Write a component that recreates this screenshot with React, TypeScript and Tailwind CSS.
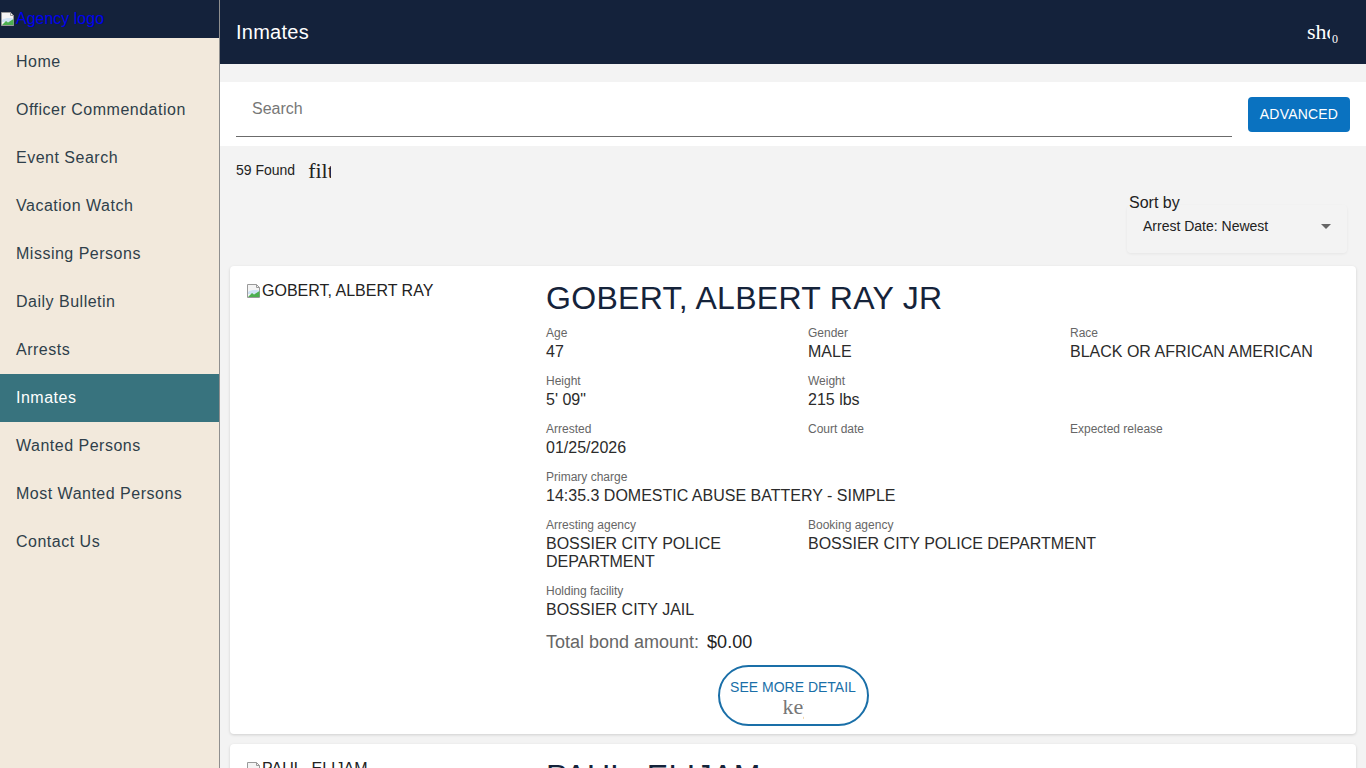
import React from "react";

const navItems = [
  "Home",
  "Officer Commendation",
  "Event Search",
  "Vacation Watch",
  "Missing Persons",
  "Daily Bulletin",
  "Arrests",
  "Inmates",
  "Wanted Persons",
  "Most Wanted Persons",
  "Contact Us",
];

const BrokenImage: React.FC = () => (
  <svg width="16" height="16" viewBox="0 0 16 16" className="block shrink-0">
    <path d="M1.5 1.5h9l3 3v10h-12z" fill="#f4f4f4" stroke="#9a9a9a" />
    <path d="M10.5 1.5v3h3" fill="none" stroke="#9a9a9a" />
    <path d="M2 9c3-2 7-2.5 11-1.5V11H2z" fill="#cfe3f5" />
    <path d="M2 14l4-4 2 1.5 5.5-3.5V14z" fill="#4caf50" />
  </svg>
);

const Field: React.FC<{ label: string; value?: string; className?: string }> = ({
  label,
  value,
  className,
}) => (
  <div className={`pr-3 mb-[13px] ${className ?? ""}`}>
    <div className="text-[12px] leading-[14px] text-[#666]">{label}</div>
    <div className="mt-[3px] text-[16px] leading-[18px] text-[#2b2b2b] min-h-[18px]">{value}</div>
  </div>
);

export default function App() {
  return (
    <div className="flex min-h-screen font-['Liberation_Sans',Arial,sans-serif] bg-[#f3f3f3]">
      {/* Sidebar */}
      <aside className="w-[220px] shrink-0 bg-[#f2e9dc] border-r border-[#8f8f8f] flex flex-col">
        <div className="h-[38px] bg-[#14223b] flex items-start">
          <a className="flex items-center text-[16px] leading-[18px] text-[#0000ee] mt-[10px]">
            <BrokenImage />
            <span>Agency logo</span>
          </a>
        </div>
        <nav className="flex flex-col">
          {navItems.map((item) => (
            <div
              key={item}
              className={`h-[48px] flex items-center px-4 text-[16px] tracking-[0.5px] ${
                item === "Inmates" ? "bg-[#38737e] text-white" : "text-[#2f3f4a]"
              }`}
            >
              {item}
            </div>
          ))}
        </nav>
      </aside>

      {/* Main */}
      <main className="flex-1 flex flex-col min-w-0">
        <header className="h-[64px] bg-[#14223b] flex items-center justify-between px-4">
          <h1 className="text-white text-[20px] tracking-[0.25px]">Inmates</h1>
          <div className="flex items-end mr-[12px]">
            <span className="w-[23px] overflow-hidden font-['Liberation_Serif',serif] text-[22px] leading-[24px] text-white whitespace-nowrap">
              shopping_cart
            </span>
            <span className="font-['Liberation_Serif',serif] text-[12px] text-white ml-[2px] -mb-[4px]">0</span>
          </div>
        </header>

        <div className="mt-[18px] bg-white h-[64px] flex items-center pl-4 pr-4 gap-4">
          <div className="flex-1 h-[55px] border-b border-[#6b6b6b] flex items-center pl-4 self-start">
            <span className="text-[16px] text-[#777]">Search</span>
          </div>
          <button className="w-[102px] h-[35px] rounded-[4px] bg-[#0a72c0] text-white text-[14px] tracking-[0.2px] uppercase">
            Advanced
          </button>
        </div>

        <div className="flex items-center px-4 h-[48px]">
          <span className="text-[14px] text-[#222]">59 Found</span>
          <span className="ml-[13px] w-[23px] overflow-hidden whitespace-nowrap font-['Liberation_Serif',serif] text-[22px] text-[#222]">
            filter_list
          </span>
        </div>

        <div className="flex justify-end pr-[19px]">
          <div className="w-[220px]">
            <div className="relative z-10 text-[16px] text-[#222] pl-[2px] leading-[18px]">Sort by</div>
            <div className="h-[48px] -mt-[7px] rounded-[4px] shadow-[0_1px_3px_rgba(0,0,0,0.06)] flex items-center justify-between pl-4 pr-[16px] pb-[6px]">
              <span className="text-[14px] text-[#222]">Arrest Date: Newest</span>
              <svg width="10" height="5" viewBox="0 0 10 5">
                <path d="M0 0h10L5 5z" fill="#666" />
              </svg>
            </div>
          </div>
        </div>

        <div className="px-[10px] pt-[13px] flex flex-col gap-[10px]">
          {/* Card 1 */}
          <div className="bg-white rounded-[4px] shadow-[0_1px_3px_rgba(0,0,0,0.15)] pt-4 pb-2 px-4 flex">
            <div className="w-[300px] shrink-0">
              <div className="flex items-center text-[16px] text-[#222] leading-[18px]">
                <BrokenImage />
                <span>GOBERT, ALBERT RAY</span>
              </div>
            </div>
            <div className="flex-1">
              <h2 className="text-[32px] leading-[32px] tracking-[0.3px] text-[#15233a] mb-[12px]">GOBERT, ALBERT RAY JR</h2>
              <div className="grid grid-cols-[262px_262px_1fr]">
                <Field label="Age" value="47" />
                <Field label="Gender" value="MALE" />
                <Field label="Race" value="BLACK OR AFRICAN AMERICAN" />
                <Field label="Height" value={`5' 09"`} />
                <Field label="Weight" value="215 lbs" />
                <div />
                <Field label="Arrested" value="01/25/2026" />
                <Field label="Court date" />
                <Field label="Expected release" />
                <Field label="Primary charge" value="14:35.3 DOMESTIC ABUSE BATTERY - SIMPLE" className="col-span-3" />
                <Field label="Arresting agency" value="BOSSIER CITY POLICE DEPARTMENT" className="pr-[60px]" />
                <Field label="Booking agency" value="BOSSIER CITY POLICE DEPARTMENT" className="col-span-2" />
                <Field label="Holding facility" value="BOSSIER CITY JAIL" className="col-span-3" />
              </div>
              <div className="text-[18px] leading-[20px] flex gap-[8px]">
                <span className="text-[#666]">Total bond amount:</span>
                <span className="text-[#222]">$0.00</span>
              </div>
              <div className="flex justify-center mt-[13px] mr-[300px]">
                <button className="w-[151px] h-[61px] rounded-full border-2 border-[#1a6fa8] flex flex-col items-center justify-center pt-[7px]">
                  <span className="text-[14px] leading-[16px] text-[#1a6fa8] uppercase">See more detail</span>
                  <span className="w-[21px] overflow-hidden whitespace-nowrap font-['Liberation_Serif',serif] text-[22px] leading-[24px] text-[#777]">
                    keyboard_arrow_down
                  </span>
                </button>
              </div>
            </div>
          </div>

          {/* Card 2 */}
          <div className="bg-white rounded-[4px] shadow-[0_1px_3px_rgba(0,0,0,0.15)] pt-4 pb-2 px-4 flex h-[200px]">
            <div className="w-[300px] shrink-0">
              <div className="flex items-center text-[16px] text-[#222] leading-[18px]">
                <BrokenImage />
                <span>PAUL, ELIJAM</span>
              </div>
            </div>
            <div className="flex-1">
              <h2 className="text-[32px] leading-[32px] tracking-[0.3px] text-[#15233a]">PAUL, ELIJAM</h2>
            </div>
          </div>
        </div>
      </main>
    </div>
  );
}
